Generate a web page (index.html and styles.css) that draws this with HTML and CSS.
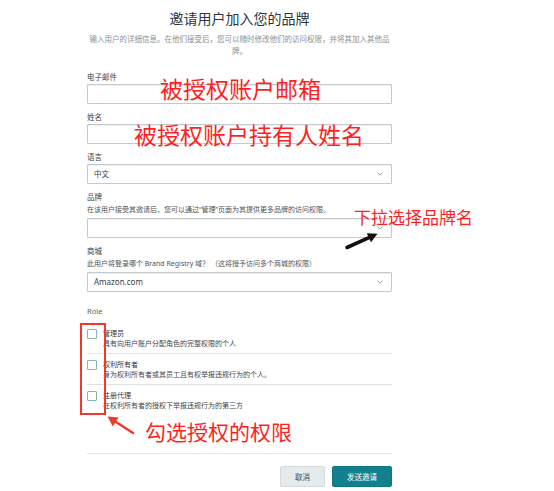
FILE: index.html
```html
<!DOCTYPE html>
<html lang="zh-CN">
<head>
<meta charset="utf-8">
<title>邀请用户加入您的品牌</title>
<link rel="stylesheet" href="styles.css">
</head>
<body>
<main class="page">
  <form class="form">
    <h1 class="title">邀请用户加入您的品牌</h1>
    <p class="intro">输入用户的详细信息。在他们接受后，您可以随时修改他们的访问权限，并将其加入其他品牌。</p>

    <div class="field">
      <label class="label">电子邮件</label>
      <input class="input" type="text">
    </div>
    <div class="field">
      <label class="label">姓名</label>
      <input class="input" type="text">
    </div>
    <div class="field">
      <label class="label">语言</label>
      <div class="select"><span class="select-value">中文</span><svg class="chev" viewBox="0 0 6 4" width="6" height="4"><polyline points="0.5,0.6 3,3.2 5.5,0.6" fill="none" stroke="#8a9196" stroke-width="0.9"/></svg></div>
    </div>
    <div class="field">
      <label class="label">品牌</label>
      <p class="help">在该用户接受其邀请后，您可以通过“管理”页面为其提供更多品牌的访问权限。</p>
      <div class="select"><span class="select-value"></span><svg class="chev" viewBox="0 0 6 4" width="6" height="4"><polyline points="0.5,0.6 3,3.2 5.5,0.6" fill="none" stroke="#8a9196" stroke-width="0.9"/></svg></div>
    </div>
    <div class="field">
      <label class="label">商城</label>
      <p class="help">此用户将登录哪个 Brand Registry 域？ （这将授予访问多个商城的权限）</p>
      <div class="select"><span class="select-value latin">Amazon.com</span><svg class="chev" viewBox="0 0 6 4" width="6" height="4"><polyline points="0.5,0.6 3,3.2 5.5,0.6" fill="none" stroke="#8a9196" stroke-width="0.9"/></svg></div>
    </div>

    <div class="role-title">Role</div>
    <ul class="roles">
      <li class="role">
        <span class="check"></span>
        <div class="role-text">
          <div class="role-name">管理员</div>
          <div class="role-desc">具有向用户账户分配角色的完整权限的个人</div>
        </div>
      </li>
      <li class="role">
        <span class="check"></span>
        <div class="role-text">
          <div class="role-name">权利所有者</div>
          <div class="role-desc">身为权利所有者或其员工且有权举报违规行为的个人。</div>
        </div>
      </li>
      <li class="role">
        <span class="check"></span>
        <div class="role-text">
          <div class="role-name">注册代理</div>
          <div class="role-desc">在权利所有者的授权下举报违规行为的第三方</div>
        </div>
      </li>
    </ul>

    <div class="actions">
      <button type="button" class="btn btn-cancel">取消</button>
      <button type="button" class="btn btn-primary">发送邀请</button>
    </div>
  </form>

  <div class="note note-email">被授权账户邮箱</div>
  <div class="note note-name">被授权账户持有人姓名</div>
  <div class="note note-brand">下拉选择品牌名</div>
  <div class="note note-role">勾选授权的权限</div>
  <div class="mark-box"></div>
  <svg class="arrows" viewBox="0 0 554 491" width="554" height="491">
    <line x1="347" y1="247.5" x2="369.5" y2="237.4" stroke="#111" stroke-width="3.6" stroke-linecap="round"/>
    <polygon points="377.5,233.8 371,242.2 366.8,233.2" fill="#111"/>
    <line x1="133" y1="433" x2="116" y2="422" stroke="#f2382a" stroke-width="2.6" stroke-linecap="round"/>
    <polygon points="107.5,416.5 118.6,417.4 112.8,426.4" fill="#f2382a"/>
  </svg>
</main>
</body>
</html>
```

FILE: styles.css
```css
html, body {
  margin: 0;
  padding: 0;
  background: #ffffff;
}

body {
  font-family: "Noto Sans", "Noto Sans CJK SC", sans-serif;
  color: #333a3f;
}

.page {
  position: relative;
  width: 554px;
  height: 491px;
  overflow: hidden;
}

.form {
  width: 305px;
  margin: 0 0 0 87px;
  padding: 0;
}

.title {
  margin: 8px 0 0;
  font-size: 14px;
  line-height: 20px;
  font-weight: 400;
  text-align: center;
  color: #2c363c;
  font-family: "Noto Sans CJK SC", sans-serif;
}

.intro {
  margin: 5px 0 0;
  font-size: 7.5px;
  line-height: 12px;
  text-align: center;
  color: #8a9094;
}

.field {
  margin-top: 8px;
}

.form > .intro + .field {
  margin-top: 15px;
}

.label {
  display: block;
  font-size: 7.5px;
  line-height: 10px;
  color: #3d4347;
}

.help {
  margin: 3px 0 0;
  font-size: 7px;
  line-height: 10px;
  color: #4d5357;
}

.input,
.select {
  display: flex;
  align-items: center;
  box-sizing: border-box;
  width: 305px;
  height: 20px;
  margin: 2px 0 0;
  padding: 0 8px 0 6px;
  border: 1px solid #c3c9cc;
  border-radius: 1px;
  background: #fff;
  box-shadow: inset 0 1px 0 #eef0f1;
  font: inherit;
  outline: none;
}

.help + .select {
  margin-top: 3px;
}

.select {
  justify-content: space-between;
}

.select-value {
  font-size: 7.5px;
  line-height: 10px;
  color: #3a4044;
}

.select-value.latin {
  font-size: 8px;
}

.chev {
  display: block;
  flex: none;
}

.role-title {
  margin-top: 14px;
  font-size: 7.5px;
  line-height: 10px;
  color: #5d6367;
}

.roles {
  list-style: none;
  margin: 7px 0 0;
  padding: 0;
}

.role {
  display: flex;
  gap: 6px;
  padding: 6px 0 4px;
  border-bottom: 1px solid #dfe2e4;
}

.role:last-child {
  border-bottom: 0;
  padding-bottom: 42px;
  border-bottom: 1px solid #e4e7e8;
}

.check {
  flex: none;
  box-sizing: border-box;
  width: 10px;
  height: 10px;
  border: 1px solid #7fb5c1;
  border-radius: 1px;
  background: #fff;
}

.role-name,
.role-desc {
  font-size: 7px;
  line-height: 10px;
}

.role-name {
  color: #2f3539;
}

.role-desc {
  color: #3f4549;
}

.actions {
  display: flex;
  justify-content: flex-end;
  gap: 7px;
  margin-top: 12px;
}

.btn {
  box-sizing: border-box;
  height: 21px;
  padding: 0;
  border-radius: 2px;
  font-family: "Noto Sans CJK SC", sans-serif;
  font-size: 7.5px;
  line-height: 19px;
  cursor: pointer;
}

.btn-cancel {
  width: 45px;
  border: 1px solid #d4dadd;
  background: #e5eaec;
  color: #3b4347;
}

.btn-primary {
  width: 60px;
  border: 1px solid #0f7683;
  background: #13808d;
  color: #ffffff;
}

/* annotation overlays */
.note {
  position: absolute;
  font-family: "Noto Sans CJK SC", sans-serif;
  color: #ff1f1f;
  line-height: 1;
  white-space: nowrap;
}

.note-email {
  left: 160px;
  top: 77px;
  font-size: 23px;
}

.note-name {
  left: 134px;
  top: 123px;
  font-size: 23px;
}

.note-brand {
  left: 354px;
  top: 208px;
  font-size: 17px;
}

.note-role {
  left: 145px;
  top: 421px;
  font-size: 21px;
}

.mark-box {
  position: absolute;
  left: 80px;
  top: 323px;
  width: 22px;
  height: 88px;
  border: 2px solid #f2382a;
}

.arrows {
  position: absolute;
  left: 0;
  top: 0;
  pointer-events: none;
}
```
